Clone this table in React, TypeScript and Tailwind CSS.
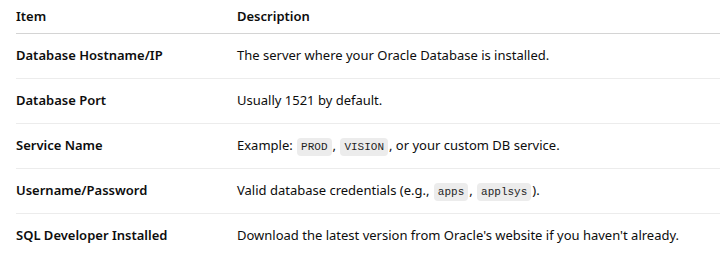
const rows: { item: string; desc: React.ReactNode }[] = [
  { item: 'Database Hostname/IP', desc: 'The server where your Oracle Database is installed.' },
  { item: 'Database Port', desc: 'Usually 1521 by default.' },
  {
    item: 'Service Name',
    desc: (
      <>
        Example: <Code>PROD</Code>, <Code>VISION</Code>, or your custom DB service.
      </>
    ),
  },
  {
    item: 'Username/Password',
    desc: (
      <>
        Valid database credentials (e.g., <Code>apps</Code>, <Code>applsys</Code>).
      </>
    ),
  },
  { item: 'SQL Developer Installed', desc: "Download the latest version from Oracle's website if you haven't already." },
];

function Code({ children }: { children: React.ReactNode }) {
  return (
    <code className="mx-[1px] rounded-[4px] bg-[#ececec] px-[4px] py-[3px] font-['Liberation_Mono','DejaVu_Sans_Mono',monospace] text-[11px] text-[#1f1f1f]">
      {children}
    </code>
  );
}

export default function App() {
  return (
    <div className="h-[263px] w-[720px] overflow-hidden bg-white pl-4 font-['Noto_Sans',sans-serif] text-[13px] text-[#0d0d0d]">
      <table className="w-[704px] border-collapse text-left">
        <thead>
          <tr className="h-[33px] border-b border-[#d4d4d4]">
            <th className="w-[221px] p-0 font-semibold">Item</th>
            <th className="p-0 font-semibold">Description</th>
          </tr>
        </thead>
        <tbody>
          {rows.map((r) => (
            <tr key={r.item} className="h-[45px] border-b border-[#ececec] last:border-b-0">
              <td className="p-0 font-semibold">{r.item}</td>
              <td className="p-0">{r.desc}</td>
            </tr>
          ))}
        </tbody>
      </table>
    </div>
  );
}
